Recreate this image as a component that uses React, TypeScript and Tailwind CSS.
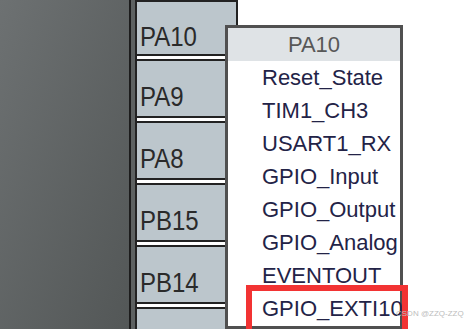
const pins = ["PA10", "PA9", "PA8", "PB15", "PB14", ""];

const modes = [
  "Reset_State",
  "TIM1_CH3",
  "USART1_RX",
  "GPIO_Input",
  "GPIO_Output",
  "GPIO_Analog",
  "EVENTOUT",
  "GPIO_EXTI10",
];

function App() {
  return (
    <div className="relative w-[470px] h-[329px] overflow-hidden bg-white font-['Liberation_Sans',Arial,sans-serif]">
      <div className="flex h-full">
        {/* chip body */}
        <div className="w-[129px] h-full bg-linear-to-br from-[#6d7172] to-[#535757]" />
        <div className="w-[2px] h-full bg-[#1c1c1c]" />
        <div className="w-[4px] h-full bg-[#5d6161]" />

        {/* pin column */}
        <div className="w-[103px] h-full flex flex-col gap-[3px] border-x-2 border-[#222] bg-white">
          {pins.map((pin, i) => (
            <div
              key={i}
              className={`shrink-0 flex items-center pt-[17px] pl-[3px] bg-[#bcc6cc] border-y-2 border-[#222] ${
                i === 0 ? "h-[56px]" : "h-[59px]"
              }`}
            >
              <span className="text-[24px] leading-none text-[#2a2a2a] scale-y-112">
                {pin}
              </span>
            </div>
          ))}
        </div>
      </div>

      {/* pin mode menu */}
      <div className="absolute left-[225px] top-[25px] w-[178px] h-[304px] border-[3px] border-[#505050] bg-white">
        <div className="h-[33px] flex items-center justify-center bg-[#dfe3e6] text-[22px] leading-none text-[#585858]">
          PA10
        </div>
        {modes.map((m) => (
          <div
            key={m}
            className="h-[33px] pl-[34px] text-[22px] leading-[33px] text-[#232347] whitespace-nowrap"
          >
            {m}
          </div>
        ))}
      </div>

      {/* highlight */}
      <div className="absolute left-[246px] top-[285px] w-[162px] h-[50px] border-[6px] border-[#f23333]" />

      <div className="absolute left-[396px] top-[310px] text-[8px] leading-none text-[#bdbdbd] whitespace-nowrap">
        CSDN @ZZQ-ZZQ
      </div>
    </div>
  );
}

export default App;
